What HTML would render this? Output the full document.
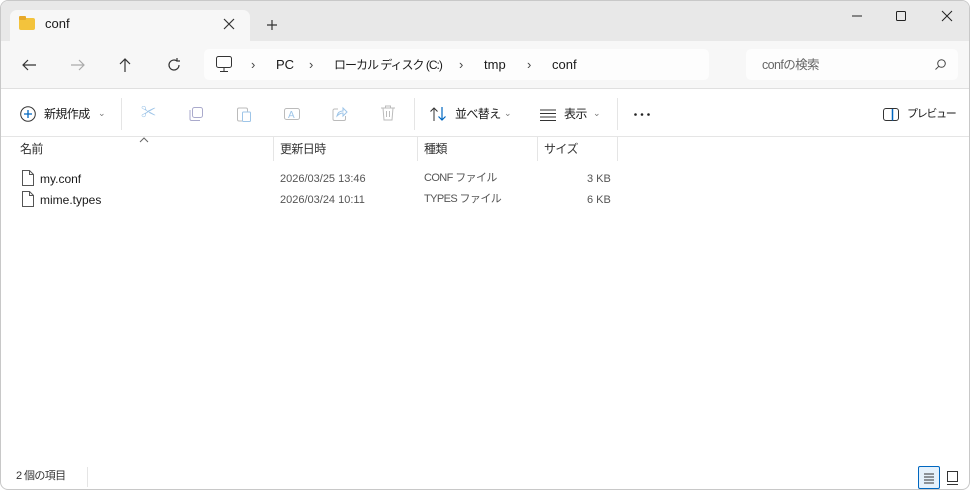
<!DOCTYPE html><html><head><meta charset="utf-8"><style>
*{margin:0;padding:0;box-sizing:border-box}
body{width:970px;height:490px;overflow:hidden;background:#fff;font-family:"Liberation Sans","Noto Sans CJK JP",sans-serif;color:#1a1a1a;position:relative}
.win{position:absolute;left:0;top:0;width:970px;height:490px;border:1px solid #c8c8c8;border-radius:8px;overflow:hidden;background:#fff}
.a{position:absolute}
.t{position:absolute;white-space:nowrap;line-height:16px}
.j{letter-spacing:-0.6px}
svg{position:absolute;overflow:visible}
</style></head><body><div class="win">
<div class="a" style="left:0;top:0;width:970px;height:40px;background:#e8e8e8"></div>
<div class="a" style="left:9px;top:9px;width:240px;height:32px;background:#f7f7f7;border-radius:7px 7px 0 0"></div>
<div class="a" style="left:18px;top:17px;width:16px;height:12px;background:#f3c33c;border-radius:2px"></div>
<div class="a" style="left:18px;top:15px;width:7px;height:4px;background:#e7a92a;border-radius:1px"></div>
<div class="t" style="left:44px;top:15px;font-size:13px">conf</div>
<svg width="10" height="10" style="left:223px;top:18px"><path d="M0 0L10 10M10 0L0 10" stroke="#333" stroke-width="1.2"/></svg>
<svg width="10" height="10" style="left:266px;top:19px"><path d="M5 0V10M0 5H10" stroke="#333" stroke-width="1.2"/></svg>
<svg width="10" height="10" style="left:851px;top:10px"><path d="M0 5H10" stroke="#222" stroke-width="1"/></svg>
<svg width="10" height="10" style="left:895px;top:10px"><rect x="0.5" y="0.5" width="9" height="9" fill="none" stroke="#222" rx="1"/></svg>
<svg width="10" height="10" style="left:941px;top:10px"><path d="M0 0L10 10M10 0L0 10" stroke="#222" stroke-width="1"/></svg>
<div class="a" style="left:0;top:40px;width:970px;height:48px;background:#f7f7f7;border-bottom:1px solid #e0e0e0"></div>
<svg width="14" height="12" style="left:21px;top:58px"><path d="M14 6H1M6 1L1 6L6 11" fill="none" stroke="#333" stroke-width="1.2"/></svg>
<svg width="14" height="12" style="left:70px;top:58px"><path d="M0 6H13M8 1L13 6L8 11" fill="none" stroke="#aaa" stroke-width="1.2"/></svg>
<svg width="12" height="14" style="left:118px;top:57px"><path d="M6 14V1M1 6L6 1L11 6" fill="none" stroke="#333" stroke-width="1.2"/></svg>
<svg width="14" height="14" style="left:166px;top:57px"><path d="M12 7A5 5 0 1 1 10 3M10 0V3H13" fill="none" stroke="#333" stroke-width="1.2"/></svg>
<div class="a" style="left:203px;top:48px;width:505px;height:31px;background:#fdfdfd;border-radius:5px"></div>
<svg width="16" height="16" style="left:215px;top:55px"><rect x="0.5" y="0.5" width="15" height="11" rx="2" fill="none" stroke="#333"/><path d="M8 12V15M4 15.5H12" stroke="#333"/></svg>
<div class="t" style="left:250px;top:56px;font-size:13px;color:#444">›</div>
<div class="t" style="left:275px;top:56px;font-size:13px">PC</div>
<div class="t" style="left:308px;top:56px;font-size:13px;color:#444">›</div>
<div class="t j" style="left:333px;top:56px;font-size:12px;letter-spacing:-1px">ローカル ディスク (C:)</div>
<div class="t" style="left:458px;top:56px;font-size:13px;color:#444">›</div>
<div class="t" style="left:483px;top:56px;font-size:13px">tmp</div>
<div class="t" style="left:526px;top:56px;font-size:13px;color:#444">›</div>
<div class="t" style="left:551px;top:56px;font-size:13px">conf</div>
<div class="a" style="left:745px;top:48px;width:212px;height:31px;background:#fdfdfd;border-radius:5px"></div>
<div class="t j" style="left:761px;top:56px;font-size:12.5px;color:#666">confの検索</div>
<svg width="11" height="11" style="left:934px;top:58px"><circle cx="6.5" cy="4.5" r="3.8" fill="none" stroke="#444"/><path d="M3.8 7.3L0.5 10.5" stroke="#444"/></svg>
<svg width="16" height="16" style="left:19px;top:105px"><circle cx="8" cy="8" r="7.3" fill="none" stroke="#333"/><path d="M8 4V12M4 8H12" stroke="#0067c0" stroke-width="1.3"/></svg>
<div class="t j" style="left:43px;top:105px;font-size:12px">新規作成</div>
<div class="t" style="left:97px;top:104px;font-size:9px;color:#777">⌄</div>
<div class="a" style="left:120px;top:97px;width:1px;height:32px;background:#e5e5e5"></div>
<div class="t" style="left:140px;top:104px;font-size:15px;color:#9ec5e8">✂</div>
<svg width="14" height="14" style="left:188px;top:106px"><rect x="3.5" y="0.5" width="10" height="10" rx="2" fill="none" stroke="#aac"/><path d="M1 3V12A1.5 1.5 0 0 0 2.5 13.5H11" fill="none" stroke="#aac"/></svg>
<svg width="14" height="16" style="left:236px;top:105px"><rect x="0.5" y="2" width="10" height="13" rx="1.5" fill="none" stroke="#bbb"/><rect x="5.5" y="6" width="8" height="9.5" rx="1" fill="#fff" stroke="#9ec5e8"/></svg>
<svg width="16" height="16" style="left:283px;top:105px"><rect x="0.5" y="2.5" width="15" height="11" rx="2" fill="none" stroke="#bbb"/><text x="4" y="12" font-size="10" fill="#9ec5e8" font-family="Liberation Sans">A</text></svg>
<svg width="16" height="15" style="left:331px;top:105px"><path d="M6 3H2.5A1.5 1.5 0 0 0 1 4.5V13A1.5 1.5 0 0 0 2.5 14.5H12A1.5 1.5 0 0 0 13.5 13V10" fill="none" stroke="#bbb"/><path d="M5 10Q6 5 11 5V2L15 6L11 10V7Q8 7 5 10Z" fill="none" stroke="#9ec5e8"/></svg>
<svg width="14" height="16" style="left:380px;top:104px"><path d="M0 3H14M4.5 3V1H9.5V3M2 3L3 15H11L12 3M5.5 6V12M8.5 6V12" fill="none" stroke="#bbb"/></svg>
<div class="a" style="left:413px;top:97px;width:1px;height:32px;background:#e5e5e5"></div>
<svg width="18" height="14" style="left:429px;top:106px"><path d="M4 14V1M0.5 4.5L4 1L7.5 4.5" fill="none" stroke="#333"/><path d="M12 0V13M8.5 9.5L12 13L15.5 9.5" fill="none" stroke="#0067c0" stroke-width="1.2"/></svg>
<div class="t j" style="left:454px;top:105px;font-size:12px">並べ替え</div>
<div class="t" style="left:503px;top:104px;font-size:9px;color:#777">⌄</div>
<svg width="16" height="12" style="left:539px;top:108px"><path d="M0 1H16M0 4.5H16M0 8H16M0 11.5H16" stroke="#333"/></svg>
<div class="t j" style="left:563px;top:105px;font-size:12px">表示</div>
<div class="t" style="left:592px;top:104px;font-size:9px;color:#777">⌄</div>
<div class="a" style="left:616px;top:97px;width:1px;height:32px;background:#e5e5e5"></div>
<svg width="18" height="4" style="left:633px;top:112px"><circle cx="1.5" cy="1.5" r="1.3" fill="#222"/><circle cx="8" cy="1.5" r="1.3" fill="#222"/><circle cx="14.5" cy="1.5" r="1.3" fill="#222"/></svg>
<svg width="16" height="13" style="left:882px;top:107px"><rect x="0.5" y="0.5" width="15" height="12" rx="2.5" fill="none" stroke="#333"/><path d="M9.5 1V12.5" stroke="#0067c0" stroke-width="1.5"/></svg>
<div class="t" style="left:906px;top:105px;font-size:11px;letter-spacing:-1.3px">プレビュー</div>
<div class="a" style="left:0;top:135px;width:970px;height:1px;background:#e5e5e5"></div>
<svg width="10" height="6" style="left:138px;top:136px"><path d="M1 5L5 1L9 5" fill="none" stroke="#666"/></svg>
<div class="t j" style="left:19px;top:140px;font-size:12px;color:#333">名前</div>
<div class="a" style="left:272px;top:136px;width:1px;height:24px;background:#e5e5e5"></div>
<div class="t j" style="left:279px;top:140px;font-size:12px;color:#333">更新日時</div>
<div class="a" style="left:416px;top:136px;width:1px;height:24px;background:#e5e5e5"></div>
<div class="t j" style="left:423px;top:140px;font-size:12px;color:#333">種類</div>
<div class="a" style="left:536px;top:136px;width:1px;height:24px;background:#e5e5e5"></div>
<div class="t j" style="left:543px;top:140px;font-size:12px;color:#333">サイズ</div>
<div class="a" style="left:616px;top:136px;width:1px;height:24px;background:#e5e5e5"></div>
<svg width="12" height="16" style="left:21px;top:169px"><path d="M0.5 0.5H7.5L11.5 4.5V15.5H0.5Z M7.5 0.5V4.5H11.5" fill="#fff" stroke="#555"/></svg>
<div class="t" style="left:39px;top:170px;font-size:12px">my.conf</div>
<div class="t" style="left:279px;top:170px;font-size:11px;color:#555">2026/03/25 13:46</div>
<div class="t j" style="left:423px;top:169px;font-size:11px;color:#555">CONF ファイル</div>
<div class="t" style="left:586px;top:170px;font-size:11px;color:#555">3 KB</div>
<svg width="12" height="16" style="left:21px;top:190px"><path d="M0.5 0.5H7.5L11.5 4.5V15.5H0.5Z M7.5 0.5V4.5H11.5" fill="#fff" stroke="#555"/></svg>
<div class="t" style="left:39px;top:191px;font-size:12px">mime.types</div>
<div class="t" style="left:279px;top:191px;font-size:11px;color:#555">2026/03/24 10:11</div>
<div class="t j" style="left:423px;top:190px;font-size:11px;color:#555">TYPES ファイル</div>
<div class="t" style="left:586px;top:191px;font-size:11px;color:#555">6 KB</div>
<div class="t j" style="left:15px;top:467px;font-size:11px;color:#333">2 個の項目</div>
<div class="a" style="left:86px;top:466px;width:1px;height:20px;background:#e5e5e5"></div>
<div class="a" style="left:917px;top:465px;width:22px;height:23px;background:#e5f1fb;border:1px solid #0067c0;border-radius:2px"></div>
<svg width="10" height="10" style="left:923px;top:472px"><path d="M0 1H10M0 4H10M0 7H10M0 10H10" stroke="#333"/></svg>
<svg width="11" height="14" style="left:946px;top:470px"><rect x="0.5" y="0.5" width="10" height="10" fill="none" stroke="#333"/><path d="M0 13.5H11" stroke="#333"/></svg>
</div></body></html>
